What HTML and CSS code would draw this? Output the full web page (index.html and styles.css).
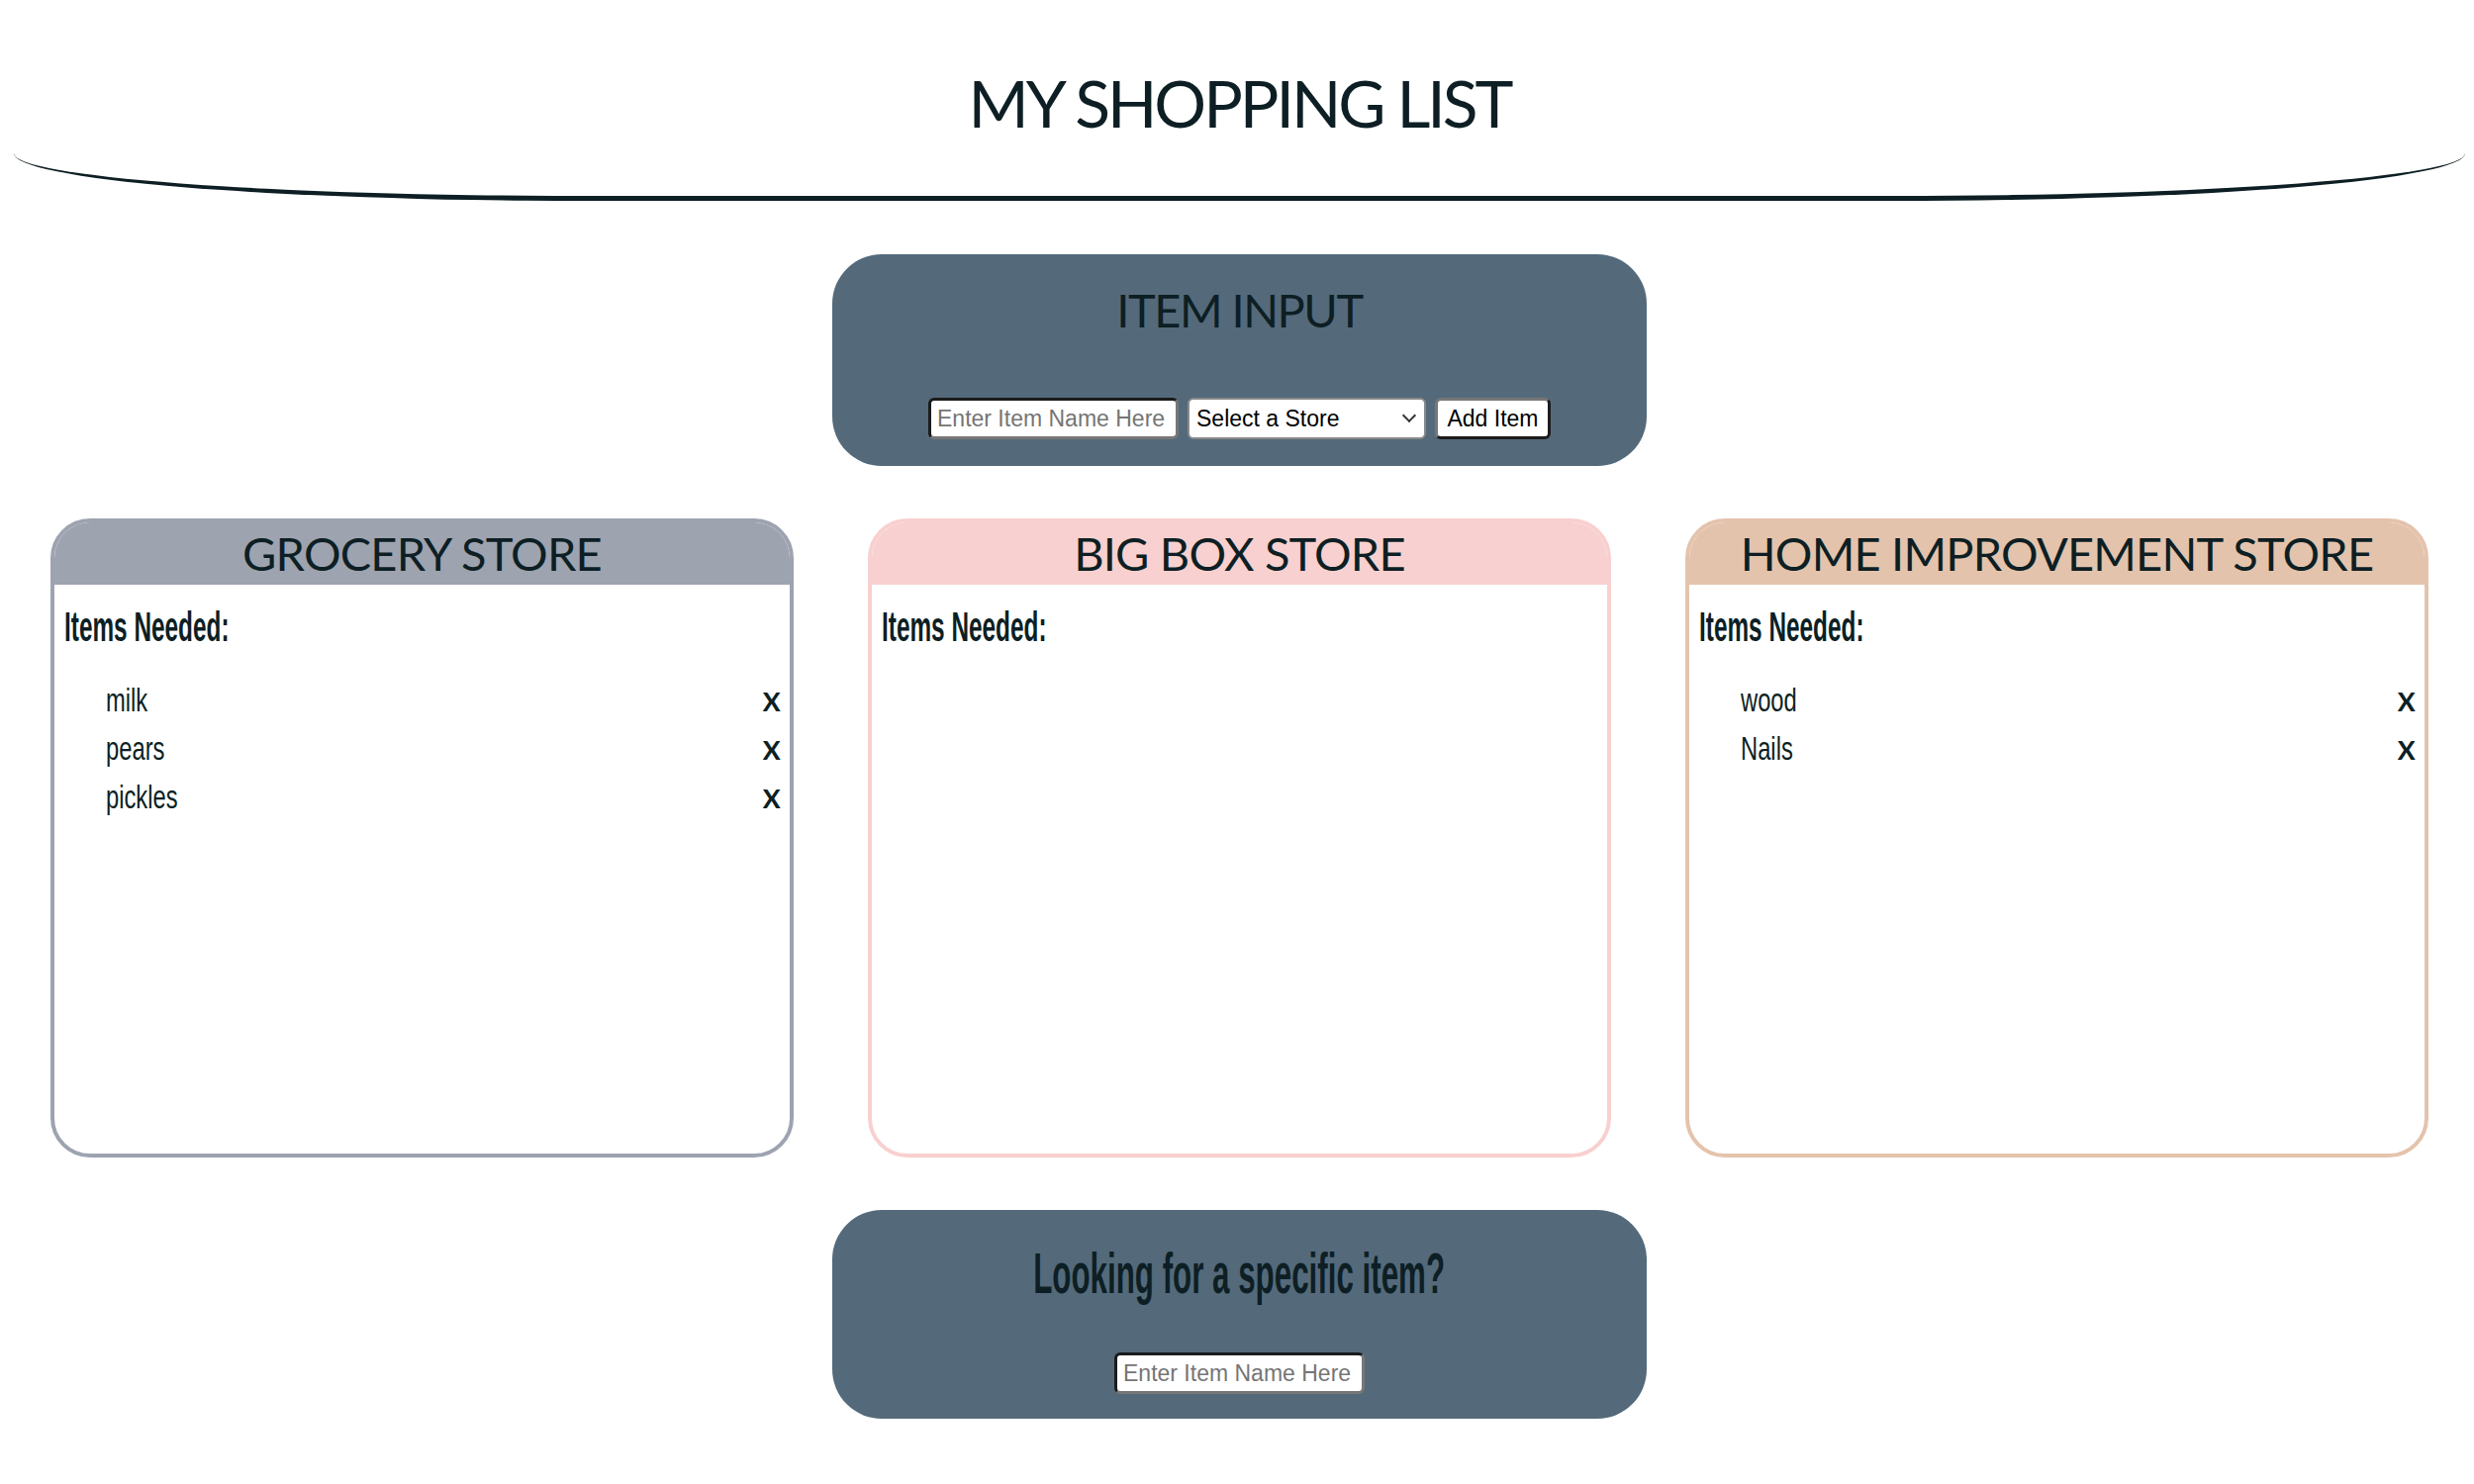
FILE: index.html
```html
<!DOCTYPE html>
<html>
<head>
    <title>My Shopping List</title>
    <link rel="stylesheet" href="styles.css">
</head>
<body>
    <header class="page-header">
        <h1>MY SHOPPING LIST</h1>
    </header>

    <main class="page">
        <section class="panel">
            <h2 class="panel-title">ITEM INPUT</h2>
            <div class="input-row">
                <input class="field" type="text" placeholder="Enter Item Name Here">
                <span class="select-wrap">
                    <select class="store-select">
                        <option>Select a Store</option>
                        <option>Grocery Store</option>
                        <option>Big Box Store</option>
                        <option>Home Improvement Store</option>
                    </select>
                </span>
                <button class="add-btn">Add Item</button>
            </div>
        </section>

        <div class="stores">
            <div class="store grocery">
                <h2 class="store-title">GROCERY STORE</h2>
                <div class="store-body">
                    <h3 class="needed"><span>Items Needed:</span></h3>
                    <ul class="items">
                        <li><span class="item-name">milk</span><span class="remove">x</span></li>
                        <li><span class="item-name">pears</span><span class="remove">x</span></li>
                        <li><span class="item-name">pickles</span><span class="remove">x</span></li>
                    </ul>
                </div>
            </div>

            <div class="store bigbox">
                <h2 class="store-title">BIG BOX STORE</h2>
                <div class="store-body">
                    <h3 class="needed"><span>Items Needed:</span></h3>
                    <ul class="items"></ul>
                </div>
            </div>

            <div class="store home">
                <h2 class="store-title">HOME IMPROVEMENT STORE</h2>
                <div class="store-body">
                    <h3 class="needed"><span>Items Needed:</span></h3>
                    <ul class="items">
                        <li><span class="item-name">wood</span><span class="remove">x</span></li>
                        <li><span class="item-name">Nails</span><span class="remove">x</span></li>
                    </ul>
                </div>
            </div>
        </div>

        <section class="panel search">
            <h2 class="search-title"><span>Looking for a specific item?</span></h2>
            <div class="input-row">
                <input class="field" type="text" placeholder="Enter Item Name Here">
            </div>
        </section>
    </main>
</body>
</html>
```

FILE: styles.css
```css
body {
    margin: 0;
    padding: 0 0 0 5px;
    font-family: 'Lato', sans-serif;
    color: #0d1f24;
    background: #ffffff;
}

/* header with the curved bottom line */
.page-header {
    box-sizing: border-box;
    height: 203px;
    margin: 0 9px;
    padding-top: 64px;
    border-bottom: 5px solid #0d1f24;
    border-radius: 0 0 575px 575px / 0 0 48px 48px;
    text-align: center;
}

.page-header h1 {
    margin: 0;
    font-size: 66px;
    font-weight: 400;
    line-height: 1.2;
    letter-spacing: -3px;
}

.page {
    display: flex;
    flex-direction: column;
    gap: 53px;
    padding-top: 54px;
}

/* dark boxes */
.panel {
    box-sizing: border-box;
    width: 823px;
    margin: 0 auto;
    padding: 26px 0 27px;
    background-color: #546a7b;
    border-radius: 50px;
    text-align: center;
}

.panel-title {
    margin: 0 0 59px;
    font-size: 47px;
    font-weight: 400;
    line-height: 60px;
    letter-spacing: -1.5px;
}

.search {
    padding: 31px 0 25px;
}

.search-title {
    margin: 0 0 47px;
    font-family: 'Liberation Sans', Arial, sans-serif;
    font-size: 58px;
    font-weight: 700;
    line-height: 66px;
}

.search-title span {
    display: inline-block;
    transform: scaleX(0.54);
}

.input-row {
    display: flex;
    justify-content: center;
    gap: 9px;
}

.field,
.store-select,
.add-btn {
    box-sizing: border-box;
    height: 42px;
    font-family: 'Liberation Sans', Arial, sans-serif;
    font-size: 23px;
    color: #000000;
    background: #ffffff;
    border-radius: 6px;
    outline: none;
}

.field {
    width: 253px;
    padding: 0 6px;
    border: 3px solid;
    border-color: #1b1b1b #777777 #777777 #1b1b1b;
}

.field::placeholder {
    color: #757575;
}

.select-wrap {
    position: relative;
    display: inline-block;
}

.select-wrap::after {
    content: "";
    position: absolute;
    right: 12px;
    top: 13px;
    width: 8px;
    height: 8px;
    border-right: 2px solid #333333;
    border-bottom: 2px solid #333333;
    transform: rotate(45deg);
    pointer-events: none;
}

.store-select {
    width: 241px;
    padding: 0 30px 0 7px;
    border: 2px solid #8a8a8a;
    appearance: none;
    -webkit-appearance: none;
}

.add-btn {
    width: 117px;
    padding: 0;
    border: 3px solid;
    border-color: #777777 #1b1b1b #1b1b1b #777777;
    cursor: pointer;
}

/* store cards */
.stores {
    display: flex;
    justify-content: center;
    gap: 75px;
}

.store {
    box-sizing: border-box;
    width: 751px;
    height: 646px;
    border: 4px solid;
    border-radius: 40px;
    overflow: hidden;
    background: #ffffff;
}

.store-title {
    margin: 0;
    height: 63px;
    font-size: 47px;
    font-weight: 400;
    line-height: 63px;
    letter-spacing: -0.8px;
    text-align: center;
}

.grocery { border-color: #9ea3b0; }
.grocery .store-title { background-color: #9ea3b0; }

.bigbox { border-color: #f8d0cf; }
.bigbox .store-title { background-color: #f8d0cf; }

.home { border-color: #e4c3ad; }
.home .store-title { background-color: #e4c3ad; }

.store-body {
    padding: 19px 9px 0 10px;
}

.needed {
    margin: 0;
    font-family: 'Liberation Sans', Arial, sans-serif;
    font-size: 42px;
    font-weight: 700;
    line-height: 48px;
}

.needed span {
    display: inline-block;
    transform: scaleX(0.58);
    transform-origin: left center;
}

.items {
    margin: 23px 0 0;
    padding: 0 0 0 42px;
    list-style: none;
}

.items li {
    display: flex;
    justify-content: space-between;
    align-items: baseline;
    height: 49px;
    line-height: 49px;
}

.item-name {
    display: inline-block;
    font-family: 'Liberation Sans', Arial, sans-serif;
    font-size: 33px;
    transform: scaleX(0.72);
    transform-origin: left center;
}

.remove {
    font-family: 'Lato', sans-serif;
    font-size: 36px;
    font-weight: 600;
    cursor: pointer;
}
```
